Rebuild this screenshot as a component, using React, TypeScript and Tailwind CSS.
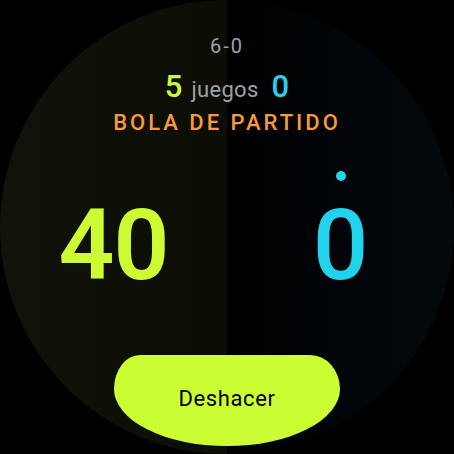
import React from "react";

const App = () => {
  return (
    <div className="w-[454px] h-[454px] bg-black" style={{ fontFamily: "Roboto, 'Noto Sans', sans-serif" }}>
      <div className="w-[454px] h-[454px] rounded-full overflow-hidden flex flex-col items-center bg-[linear-gradient(90deg,#11130a_0%,#0c0d05_50%,#000000_50%,#01060a_80%,#03090b_100%)]">
        {/* set score */}
        <div className="pt-[36px] text-[20px] leading-[20px] tracking-[2px] text-[#9ea2a6]">6-0</div>

        {/* games */}
        <div className="mt-[16px] flex items-baseline h-[30px]">
          <span className="text-[31px] leading-[30px] font-medium text-[#cdfc32]">5</span>
          <span className="ml-[9px] text-[22px] leading-[30px] tracking-[0.3px] text-[#9ea2a6]">juegos</span>
          <span className="ml-[13px] text-[31px] leading-[30px] font-medium text-[#22d3ee]">0</span>
        </div>

        <div className="mt-[10px] text-[22px] leading-[22px] font-medium tracking-[3px] text-[#f79a3c]">
          BOLA DE PARTIDO
        </div>

        {/* points */}
        <div className="mt-[37px] w-full grid grid-cols-2">
          <div className="flex flex-col items-center pt-[26px]">
            <span className="text-[98px] leading-[98px] font-semibold tracking-[-1px] text-[#cdfc32]">40</span>
          </div>
          <div className="flex flex-col items-center">
            <div className="w-[10px] h-[10px] rounded-full bg-[#22d3ee]" />
            <span className="mt-[16px] text-[98px] leading-[98px] font-medium text-[#22d3ee]">0</span>
          </div>
        </div>

        <button className="mt-[60px] w-[226px] h-[91px] shrink-0 flex items-center justify-center pb-[4px] bg-[#ccff33] rounded-[26px_30px_113px_113px/34px_34px_57px_57px] text-[22px] leading-[22px] tracking-[0.6px] text-black">
          Deshacer
        </button>
      </div>
    </div>
  );
};

export default App;
